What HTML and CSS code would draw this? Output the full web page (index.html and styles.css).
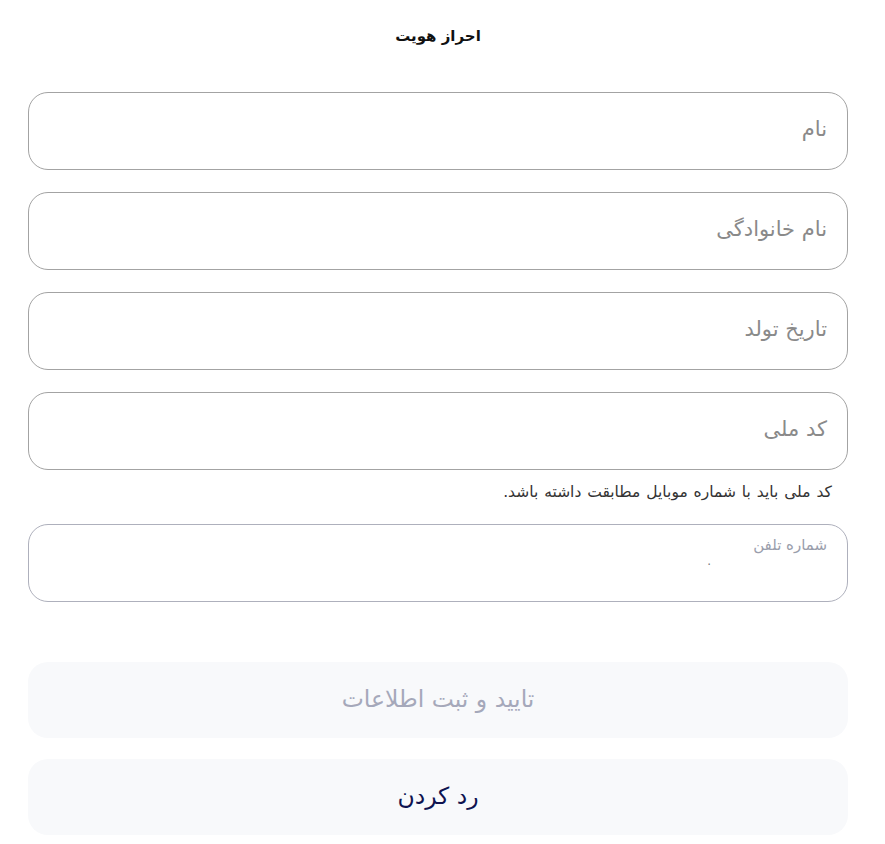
FILE: index.html
```html
<!DOCTYPE html>
<html lang="fa" dir="rtl">
<head>
<meta charset="utf-8">
<link rel="stylesheet" href="styles.css">
</head>
<body>
<div class="page">
  <h1 class="title">احراز هویت</h1>
  <form class="form">
    <div class="field"><span class="placeholder">نام</span></div>
    <div class="field"><span class="placeholder">نام خانوادگی</span></div>
    <div class="field"><span class="placeholder">تاریخ تولد</span></div>
    <div class="group">
      <div class="field"><span class="placeholder">کد ملی</span></div>
      <p class="hint">کد ملی باید با شماره موبایل مطابقت داشته باشد.</p>
    </div>
    <div class="field phone">
      <span class="label">شماره تلفن</span>
      <span class="dot">.</span>
    </div>
  </form>
  <div class="actions">
    <button class="btn btn-primary" type="button">تایید و ثبت اطلاعات</button>
    <button class="btn btn-secondary" type="button">رد کردن</button>
  </div>
</div>
</body>
</html>
```
FILE: styles.css
```css
* { box-sizing: border-box; }
html, body { margin: 0; padding: 0; background: #ffffff; }
body { font-family: "DejaVu Sans", "Noto Sans", sans-serif; color: #111; }
.page { width: 885px; padding: 24px 37px 0 28px; }
.title {
  margin: 0;
  text-align: center;
  font-size: 15px;
  font-weight: bold;
  line-height: 24px;
  color: #111;
  padding-left: 0;
}
.form { margin-top: 44px; display: flex; flex-direction: column; gap: 22px; }
.field {
  height: 78px;
  border: 1px solid #a3a3a3;
  border-radius: 20px;
  display: flex;
  align-items: center;
  padding: 0 20px 4px;
}
.placeholder { font-size: 21px; color: #8a8a8a; }
.group { display: flex; flex-direction: column; }
.hint { margin: 12px 16px 0 0; font-size: 15.5px; color: #333; line-height: 20px; word-spacing: 1px; }
.phone { border-color: #aeb0bc; flex-direction: column; align-items: flex-start; justify-content: flex-start; padding-top: 11px; }
.phone .label { font-size: 15px; color: #9a9eac; line-height: 18px; }
.phone .dot { margin-right: 116px; font-size: 12px; color: #777; line-height: 12px; margin-top: 1px; }
.actions { margin-top: 60px; display: flex; flex-direction: column; gap: 21px; }
.btn {
  height: 76px;
  width: 100%;
  border: none;
  border-radius: 20px;
  background: #f8f9fb;
  font-family: "DejaVu Sans", sans-serif;
  font-size: 23.5px;
  padding-bottom: 4px;
}
.btn-primary { color: #a5a8ba; }
.btn-secondary { color: #0e1350; }
```
